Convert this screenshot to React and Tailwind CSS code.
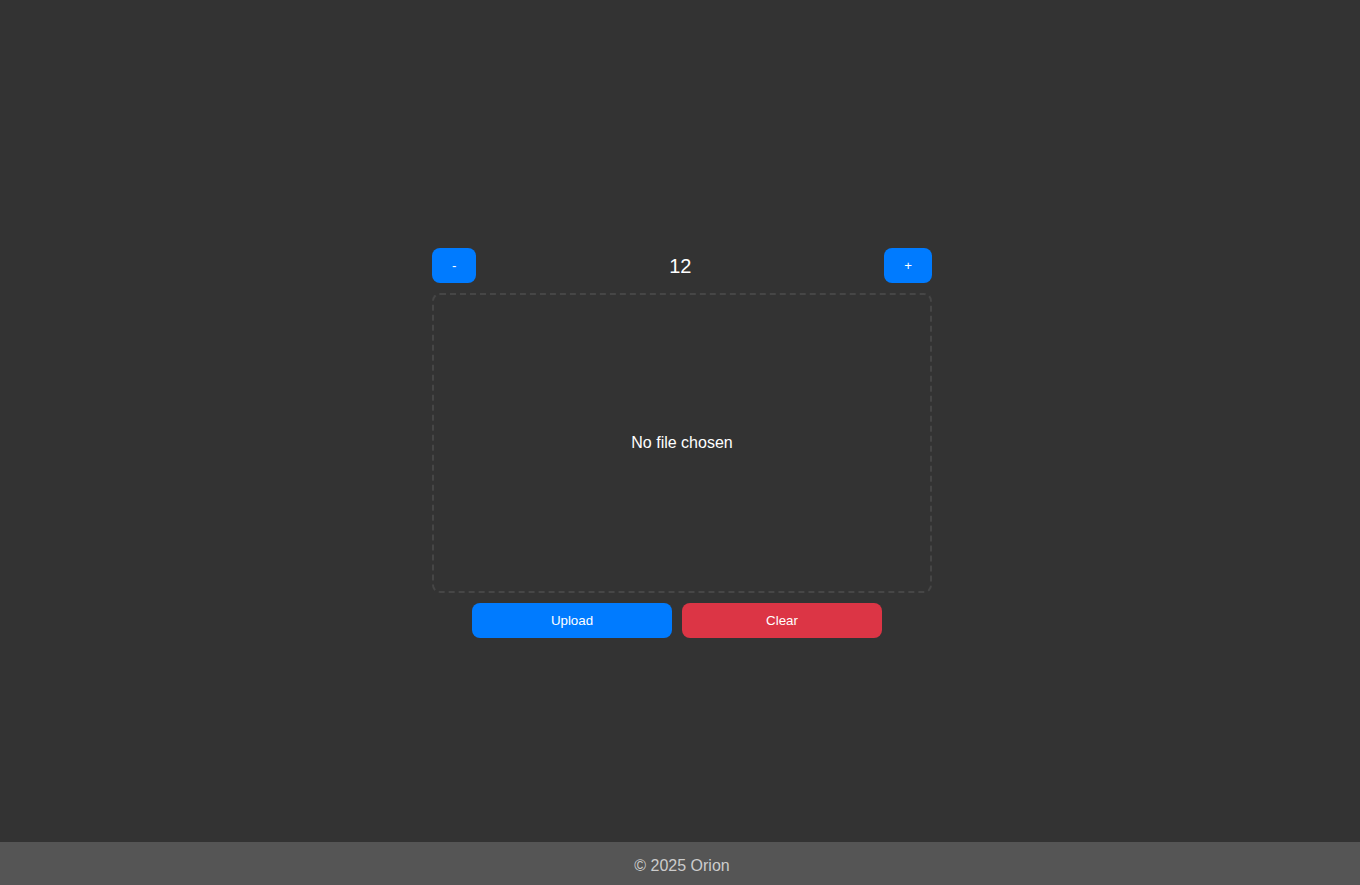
import { useState } from 'react'

export default function App() {
  const [count, setCount] = useState(12)

  return (
    <div className="min-h-screen bg-[#333333] text-white" style={{ fontFamily: '"Liberation Sans", Arial, sans-serif' }}>
      <main className="flex min-h-screen items-center justify-center pl-[4px]">
        <div className="flex w-[500px] flex-col items-center gap-[10px]">
          <div className="flex w-full items-center justify-between">
            <button
              onClick={() => setCount((c) => c - 1)}
              className="h-[35px] rounded-lg bg-[#007bff] px-5 pt-[2px] text-[13.33px] text-white"
            >-</button>
            <span className="pt-[2px] text-[20px] leading-none">{count}</span>
            <button
              onClick={() => setCount((c) => c + 1)}
              className="h-[35px] rounded-lg bg-[#007bff] px-5 pt-[2px] text-[13.33px] text-white"
            >+</button>
          </div>

          <div className="flex h-[300px] w-full items-center justify-center rounded-lg border-2 border-dashed border-[#464646]">
            <span className="text-base">No file chosen</span>
          </div>

          <div className="flex">
            <button className="mr-[10px] h-[35px] w-[200px] rounded-lg bg-[#007bff] pt-[2px] text-[13.33px] text-white">Upload</button>
            <button className="mr-[10px] h-[35px] w-[200px] rounded-lg bg-[#dc3545] pt-[2px] text-[13.33px] text-white">Clear</button>
          </div>
        </div>
      </main>

      <footer className="fixed inset-x-0 bottom-0 flex h-[43px] items-center justify-center bg-[#555555] pl-[4px] pt-[4px] text-base text-[#cccccc]">
        © 2025 Orion
      </footer>
    </div>
  )
}
